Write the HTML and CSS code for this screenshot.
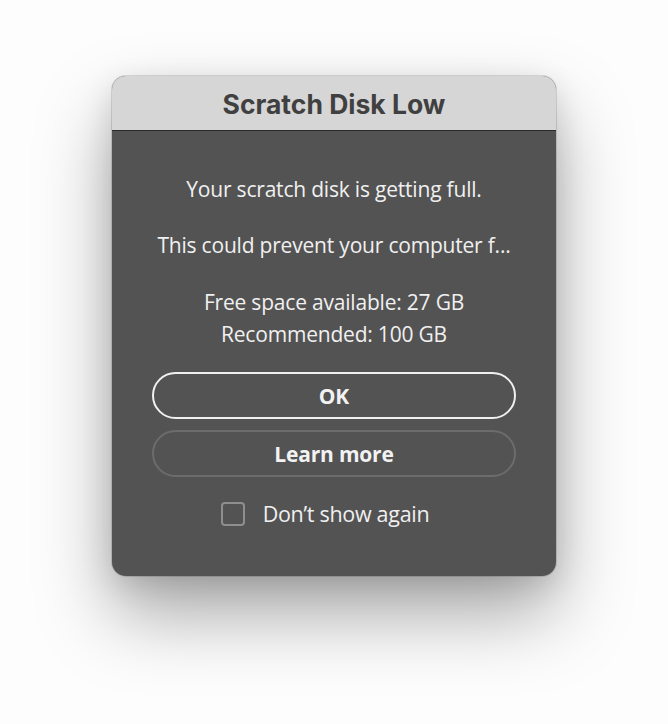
FILE: index.html
```html
<!DOCTYPE html>
<html>
<head>
<meta charset="utf-8">
<link rel="stylesheet" href="styles.css">
</head>
<body>
<div class="stage">
  <div class="dialog">
    <div class="titlebar">Scratch Disk Low</div>
    <div class="content">
      <p class="msg">Your scratch disk is getting full.</p>
      <p class="msg">This could prevent your computer f...</p>
      <div class="stats">
        <div>Free space available: 27 GB</div>
        <div>Recommended: 100 GB</div>
      </div>
      <div class="buttons">
        <button class="btn btn-primary">OK</button>
        <button class="btn btn-secondary">Learn more</button>
      </div>
      <label class="check">
        <span class="box"></span>
        <span class="check-label">Don’t show again</span>
      </label>
    </div>
  </div>
</div>
</body>
</html>
```

FILE: styles.css
```css
html, body {
  margin: 0;
  padding: 0;
  background: #ffffff;
}
.stage {
  width: 668px;
  height: 724px;
  display: flex;
  justify-content: center;
  padding-top: 76px;
  box-sizing: border-box;
  background: #fdfdfd;
}
.dialog {
  width: 444px;
  height: 500px;
  border-radius: 14px;
  overflow: hidden;
  background: #535353;
  display: flex;
  flex-direction: column;
  box-shadow: 0 0 0 1px rgba(0,0,0,0.12), 0 38px 75px rgba(0,0,0,0.34), 0 8px 30px rgba(0,0,0,0.12);
}
.titlebar {
  height: 55px;
  background: #d6d6d6;
  border-bottom: 1px solid #2a2a2a;
  display: flex;
  align-items: center;
  justify-content: center;
  font-family: "Inter", "Liberation Sans", sans-serif;
  font-weight: 700;
  font-size: 26.5px;
  color: #404040;
  letter-spacing: 0;
  padding-top: 1px;
  box-sizing: border-box;
}
.content {
  display: flex;
  flex-direction: column;
  align-items: center;
  padding: 44px 40px 0;
  font-family: "Open Sans", "Liberation Sans", sans-serif;
  color: #f0f0f0;
  font-size: 21px;
}
.msg {
  margin: 0 0 27px;
  line-height: 29px;
  letter-spacing: -0.2px;
}
.stats {
  text-align: center;
  line-height: 32px;
  letter-spacing: -0.2px;
  margin-top: -1px;
}
.buttons {
  display: flex;
  flex-direction: column;
  gap: 11px;
  margin-top: 22px;
  width: 364px;
}
.btn {
  height: 47px;
  border-radius: 24px;
  background: transparent;
  font-family: "Open Sans", "Liberation Sans", sans-serif;
  font-weight: 700;
  font-size: 21px;
  color: #f2f2f2;
  letter-spacing: -0.2px;
  padding: 0;
}
.btn-primary {
  border: 2px solid #f0f0f0;
}
.btn-secondary {
  border: 2px solid #6c6c6c;
}
.check {
  display: flex;
  align-items: center;
  gap: 18px;
  margin-top: 22px;
  margin-right: 18px;
}
.box {
  width: 20px;
  height: 20px;
  border: 2px solid #8e8e8e;
  border-radius: 4px;
}
.check-label {
  font-size: 21.5px;
  letter-spacing: -0.3px;
}
```
